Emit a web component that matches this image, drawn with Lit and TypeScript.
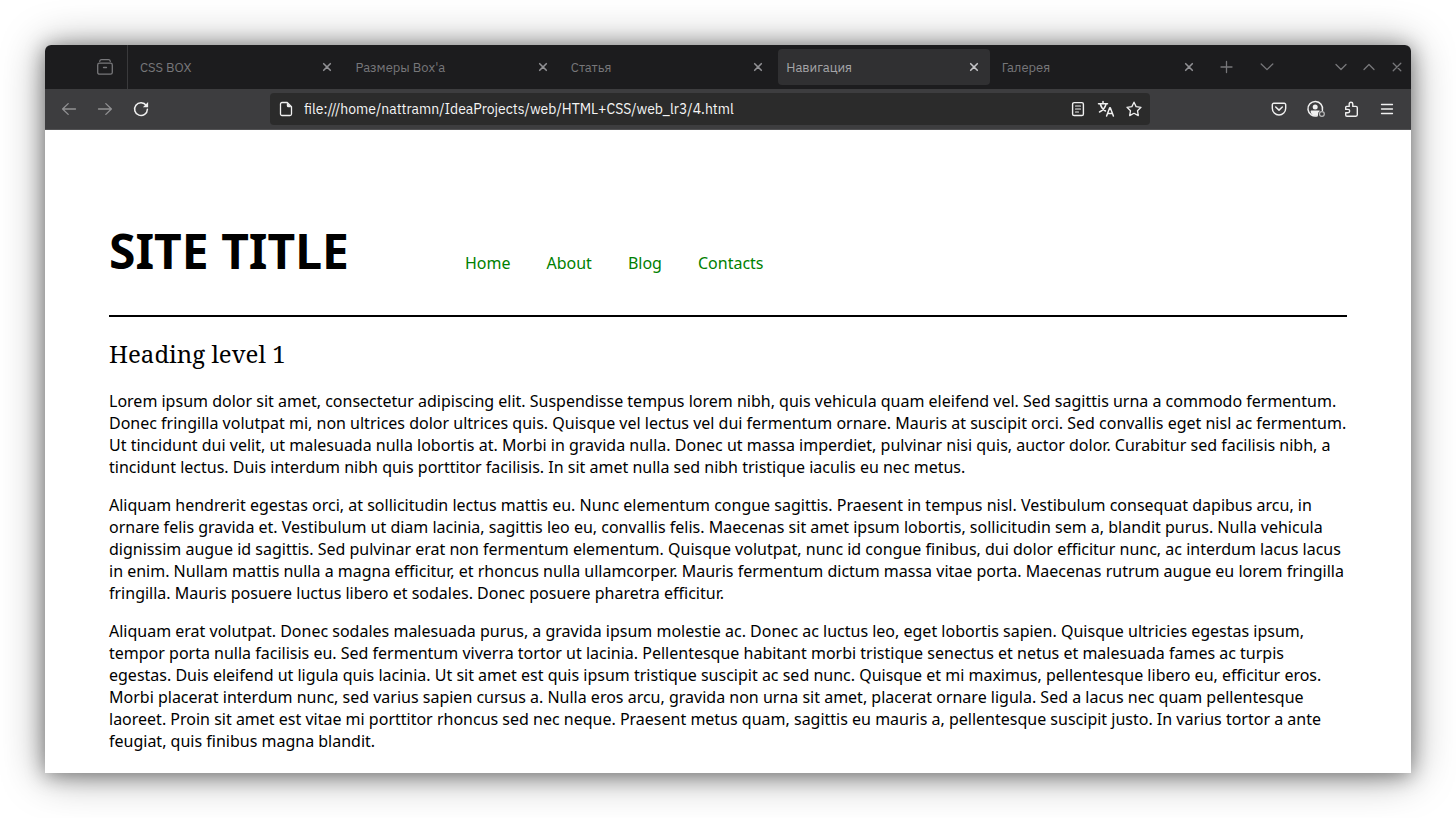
import { LitElement, html, css, svg, TemplateResult } from "lit";
import { customElement, property, state } from "lit/decorators.js";
import { classMap } from "lit/directives/class-map.js";

const glyphs: Record<string, TemplateResult> = {
  archive: svg`<path d="M2.7 2.300Q3 .700 4.500.700h7Q13 .700 13.300 2.300"/><rect x=".7" y="4.200" width="14.600" height="11" rx="1.800"/><path d="M6.500 8.500h3"/>`,
  close: svg`<path d="m4.200 4.200 7.600 7.600m0-7.600-7.600 7.600"/>`,
  tabClose: svg`<path d="m4.700 4.700 6.600 6.600m0-6.600-6.600 6.600" stroke-width="1.600"/>`,
  plus: svg`<path d="M7.500 2.500v11M2 8h11"/>`,
  down: svg`<path d="m2.200 5 5.800 5.600L13.800 5"/>`,
  smallDown: svg`<path d="m3 5.500 5 5 5-5"/>`,
  smallUp: svg`<path d="m3 10.500 5-5 5 5"/>`,
  back: svg`<path d="M14.500 8H1.600M7.200 2.600 1.600 8l5.600 5.400"/>`,
  forward: svg`<path d="M1.500 8h12.900M8.800 2.600 14.400 8l-5.600 5.400"/>`,
  reload: svg`<path d="M13.300 4.500A6.400 6.400 0 1 0 14.400 8.200" stroke-width="1.500"/><path d="M15.100 1v5.200H9.900z" fill="currentColor" stroke="none"/>`,
  page: svg`<path d="M4 1.500h5.200l4.300 4.300v7.200a1.500 1.500 0 0 1-1.500 1.500H4A1.500 1.500 0 0 1 2.500 13V3A1.500 1.500 0 0 1 4 1.500z"/><path d="M8.800 1.500v3.200a1.500 1.500 0 0 0 1.500 1.500h3.200z" fill="currentColor" stroke="none"/>`,
  reader: svg`<rect x="2.600" y="1.600" width="10.800" height="12.900" rx="1.600" stroke-width="1.400"/><path d="M5.500 5h5M5.500 8h5M5.500 11h3" stroke-width="1.100"/>`,
  translate: svg`<path d="M.5 2.800h9M5 .600v2.200M2.300 3.200c.900 3 2.700 5.400 5.200 6.800M8 3.200C7 6.800 4.800 9.500 1.500 11" stroke-width="1.500"/><path d="m8.600 15 3.100-8.200h.6l3.100 8.200M9.600 12.500h4.800" stroke-width="1.500"/>`,
  star: svg`<path d="m8 1.200 2.100 4.400 4.900.700-3.500 3.400.800 4.900L8 12.300l-4.300 2.300.800-4.900L1 6.300l4.900-.700z"/>`,
  pocket: svg`<path d="M2.800 2.200h10.400a1.500 1.500 0 0 1 1.500 1.500v3.600a6.700 6.700 0 0 1-13.400 0V3.700a1.500 1.500 0 0 1 1.500-1.500z" stroke-width="1.400"/><path d="M4.700 6 8 9.100 11.300 6" stroke-width="1.500"/>`,
  account: svg`<path d="M10.300 14.800A7.300 7.300 0 1 1 15.400 9.300" stroke-width="1.500"/><circle cx="8.200" cy="6" r="2.500" fill="currentColor" stroke="none"/><path d="M3.600 10.200q0-.700.700-.700h7.800q.800 0 .800.500-2.200 1.200-1.900 4.100Q8 15.400 5.200 13.800 3.800 12.400 3.600 10.200z" fill="currentColor" stroke="none"/><circle cx="14.900" cy="13" r="2.400" stroke-width="1.200" opacity=".7"/>`,
  puzzle: svg`<path d="M2.700 7.800V6.300q0-.900.900-.900h2.600V3a1.800 1.800 0 0 1 3.600 0v2.400h3.100q1.400 0 1.400 1.400v7q0 1.400-1.400 1.400H3.900q-1.200 0-1.200-1.200v-2.200H5a1.700 1.700 0 0 0 0-3.400H2.700z" stroke-width="1.400"/>`,
  menu: svg`<path d="M2.500 3.500h11M2.500 8h11M2.500 12.500h11"/>`,
};

@customElement("ui-icon")
class UiIcon extends LitElement {
  @property() name = "";
  static styles = css`
    :host { display: block; width: 16px; height: 16px; }
    .glyph {
      display: block; width: 100%; height: 100%; overflow: visible;
      fill: none; stroke: currentColor; stroke-width: 1.3;
      stroke-linecap: round; stroke-linejoin: round;
    }
  `;
  render() {
    return html`<svg class="glyph" viewBox="0 0 16 16" aria-hidden="true">${glyphs[this.name]}</svg>`;
  }
}

const paragraphs = [
  "Lorem ipsum dolor sit amet, consectetur adipiscing elit. Suspendisse tempus lorem nibh, quis vehicula quam eleifend vel. Sed sagittis urna a commodo fermentum. Donec fringilla volutpat mi, non ultrices dolor ultrices quis. Quisque vel lectus vel dui fermentum ornare. Mauris at suscipit orci. Sed convallis eget nisl ac fermentum. Ut tincidunt dui velit, ut malesuada nulla lobortis at. Morbi in gravida nulla. Donec ut massa imperdiet, pulvinar nisi quis, auctor dolor. Curabitur sed facilisis nibh, a tincidunt lectus. Duis interdum nibh quis porttitor facilisis. In sit amet nulla sed nibh tristique iaculis eu nec metus.",
  "Aliquam hendrerit egestas orci, at sollicitudin lectus mattis eu. Nunc elementum congue sagittis. Praesent in tempus nisl. Vestibulum consequat dapibus arcu, in ornare felis gravida et. Vestibulum ut diam lacinia, sagittis leo eu, convallis felis. Maecenas sit amet ipsum lobortis, sollicitudin sem a, blandit purus. Nulla vehicula dignissim augue id sagittis. Sed pulvinar erat non fermentum elementum. Quisque volutpat, nunc id congue finibus, dui dolor efficitur nunc, ac interdum lacus lacus in enim. Nullam mattis nulla a magna efficitur, et rhoncus nulla ullamcorper. Mauris fermentum dictum massa vitae porta. Maecenas rutrum augue eu lorem fringilla fringilla. Mauris posuere luctus libero et sodales. Donec posuere pharetra efficitur.",
  "Aliquam erat volutpat. Donec sodales malesuada purus, a gravida ipsum molestie ac. Donec ac luctus leo, eget lobortis sapien. Quisque ultricies egestas ipsum, tempor porta nulla facilisis eu. Sed fermentum viverra tortor ut lacinia. Pellentesque habitant morbi tristique senectus et netus et malesuada fames ac turpis egestas. Duis eleifend ut ligula quis lacinia. Ut sit amet est quis ipsum tristique suscipit ac sed nunc. Quisque et mi maximus, pellentesque libero eu, efficitur eros. Morbi placerat interdum nunc, sed varius sapien cursus a. Nulla eros arcu, gravida non urna sit amet, placerat ornare ligula. Sed a lacus nec quam pellentesque laoreet. Proin sit amet est vitae mi porttitor rhoncus sed nec neque. Praesent metus quam, sagittis eu mauris a, pellentesque suscipit justo. In varius tortor a ante feugiat, quis finibus magna blandit.",
];

@customElement("app-root")
class AppRoot extends LitElement {
  @state() private active = 3;
  private tabs = ["CSS BOX", "Размеры Box'а", "Статья", "Навигация", "Галерея"];

  static styles = css`
    :host { display: block; padding: 45px; background: #fff; }
    * { box-sizing: border-box; }
    .window {
      border-radius: 6px 6px 0 0;
      box-shadow: 0 2px 20px rgba(0, 0, 0, 0.4), 0 2px 44px rgba(0, 0, 0, 0.4);
      background: #fff;
    }
    button {
      border: 0; padding: 0; margin: 0; background: none;
      color: inherit; font: inherit;
    }
    .chrome { font-family: "IBM Plex Sans", Roboto, sans-serif; }
    .tabbar {
      display: flex; height: 44px; color: #77777a;
      background: #1c1c1e; border-radius: 6px 6px 0 0;
    }
    .archive {
      display: flex; align-items: center; justify-content: flex-end;
      width: 83px; padding-right: 14px; border-right: 1px solid #3a3a3c;
    }
    .tabs { flex: 1; display: flex; gap: 4px; padding: 4px 2px 4px 4px; min-width: 0; }
    .tab {
      flex: 1; min-width: 0; display: flex; align-items: center;
      padding: 0 8px; border-radius: 4px;
    }
    .tab.active { background: #303032; color: #a5a5a8; }
    .label {
      flex: 1; min-width: 0; height: 36px; text-align: left;
      font-size: 13px; line-height: 38px; overflow: hidden; white-space: nowrap;
    }
    .tab ui-icon { color: #909094; }
    .tab.active ui-icon { color: #c4c4c7; }
    .actions { display: flex; align-items: center; }
    .cell { display: grid; place-items: center; width: 40px; height: 36px; }
    .controls { display: flex; align-items: center; margin-left: 40px; }
    .controls .cell { width: 28px; }
    .toolbar {
      display: flex; align-items: center; height: 41px; padding: 0 6px;
      background: #3d3d3f; border-bottom: 1px solid #525254; color: #f0f0f0;
    }
    .toolbar .cell { width: 36px; }
    .toolbar .dim { color: #919193; }
    .address {
      flex: 1; display: flex; align-items: center; min-width: 0; height: 32px;
      margin: 0 111px; padding: 0 2px 0 8px; background: #2b2b2b; border-radius: 4px;
    }
    .url {
      flex: 1; min-width: 0; height: 32px; padding: 0 0 0 10px; border: 0;
      outline: 0; background: none; color: #f5f5f5; font: inherit; font-size: 14px;
    }
    .address .cell { width: 28px; }
    .page {
      padding: 90px 64px 21px; color: #000;
      font-family: "Noto Sans", sans-serif; font-size: 16px; line-height: 22px;
    }
    .masthead {
      display: flex; align-items: baseline; gap: 116px;
      padding-bottom: 34px; border-bottom: 2px solid #000;
    }
    .title { font-size: 48px; line-height: 61px; font-weight: 700; white-space: nowrap; }
    .nav { display: flex; gap: 36px; }
    .nav a { color: #008000; text-decoration: none; }
    h1 {
      margin: 21px 0 20px; font-family: "Noto Serif", "Droid Serif", serif;
      font-size: 24px; line-height: 32px; font-weight: 400;
    }
    p { margin: 0 0 16px; }
    p:last-child { margin: 0; }
  `;

  private button(icon: string, label: string, dim = false) {
    return html`<button class=${classMap({ cell: true, dim })} aria-label=${label}><ui-icon name=${icon}></ui-icon></button>`;
  }

  render() {
    return html`
      <div class="window">
        <div class="chrome">
          <div class="tabbar">
            <button class="archive" aria-label="Recent browsing"><ui-icon name="archive"></ui-icon></button>
            <div class="tabs">
              ${this.tabs.map((t, i) => html`
                <div class=${classMap({ tab: true, active: i === this.active })}>
                  <button class="label" @click=${() => (this.active = i)}>${t}</button>
                  <button aria-label="Close tab"><ui-icon name="tabClose"></ui-icon></button>
                </div>`)}
            </div>
            <div class="actions">
              ${this.button("plus", "New tab")}${this.button("down", "List all tabs")}
            </div>
            <div class="controls">
              ${this.button("smallDown", "Minimize")}${this.button("smallUp", "Maximize")}${this.button("close", "Close window")}
            </div>
          </div>
          <div class="toolbar">
            ${this.button("back", "Back", true)}${this.button("forward", "Forward", true)}${this.button("reload", "Reload")}
            <div class="address">
              <ui-icon name="page"></ui-icon>
              <input class="url" aria-label="Address" spellcheck="false" value="file:///home/nattramn/IdeaProjects/web/HTML+CSS/web_lr3/4.html">
              ${this.button("reader", "Reader view")}${this.button("translate", "Translate page")}${this.button("star", "Bookmark")}
            </div>
            ${this.button("pocket", "Save to Pocket")}${this.button("account", "Account")}${this.button("puzzle", "Extensions")}${this.button("menu", "Menu")}
          </div>
        </div>
        <div class="page">
          <header class="masthead">
            <div class="title">SITE TITLE</div>
            <nav class="nav">
              ${["Home", "About", "Blog", "Contacts"].map((n) => html`<a href="#">${n}</a>`)}
            </nav>
          </header>
          <main>
            <h1>Heading level 1</h1>
            ${paragraphs.map((p) => html`<p>${p}</p>`)}
          </main>
        </div>
      </div>
    `;
  }
}
